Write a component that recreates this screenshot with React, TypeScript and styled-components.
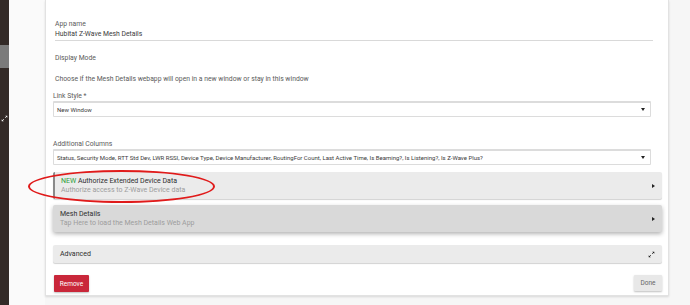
import React from "react";
import styled, { createGlobalStyle } from "styled-components";

const GlobalStyle = createGlobalStyle`
  html, body {
    margin: 0;
    padding: 0;
    background: #f6f6f6;
    font-family: Roboto, "Liberation Sans", Arial, sans-serif;
  }
`;

const Page = styled.div`
  display: flex;
  width: 690px;
  height: 305px;
  overflow: hidden;
`;

const SideBar = styled.div`
  width: 9px;
  flex-shrink: 0;
  background: #332a27;
  display: flex;
  flex-direction: column;
  align-items: center;
`;

const SideBlock = styled.div`
  margin-top: 45px;
  width: 100%;
  height: 23px;
  background: #7b7b7b;
`;

const SideIcon = styled.div`
  margin-top: 47px;
  line-height: 0;
`;

const Gutter = styled.div`
  width: 36px;
  flex-shrink: 0;
  background: #fafafa;
`;

const Panel = styled.div`
  width: 624px;
  height: 296px;
  box-sizing: border-box;
  background: #fff;
  border: 1px solid #e2e2e2;
  border-top: none;
  box-shadow: 0 1px 2px rgba(0, 0, 0, 0.12);
  padding: 0 6px 0 7px;
  display: flex;
  flex-direction: column;
`;

const Field = styled.div`
  margin: 19px 9px 0 2px;
  border-bottom: 1px solid #d9d9d9;
  padding-bottom: 1px;
`;

const Label = styled.div<{ top?: number; indent?: number }>`
  font-size: 6.8px;
  line-height: 10px;
  color: #5a5a5a;
  margin-top: ${(p) => p.top ?? 0}px;
  padding-left: ${(p) => p.indent ?? 0}px;
`;

const Value = styled.div`
  font-size: 6.8px;
  line-height: 10px;
  color: #3a3a3a;
`;

const Select = styled.div`
  margin-right: 11px;
  height: 16px;
  box-sizing: border-box;
  border: 1px solid #dcdcdc;
  border-top-width: 2px;
  border-radius: 1px;
  display: flex;
  align-items: center;
  justify-content: space-between;
  padding: 0 5px 0 3px;
  font-size: 6px;
  color: #3a3a3a;
  white-space: nowrap;
  overflow: hidden;
`;

const Caret = styled.span`
  width: 0;
  height: 0;
  border-left: 2.5px solid transparent;
  border-right: 2.5px solid transparent;
  border-top: 3px solid #222;
  flex-shrink: 0;
`;

const Card = styled.div<{ shade: string; top: number; height: number; accent?: boolean; raised?: boolean }>`
  position: relative;
  flex-shrink: 0;
  margin-top: ${(p) => p.top}px;
  height: ${(p) => p.height}px;
  box-sizing: border-box;
  background: ${(p) => p.shade};
  border-left: ${(p) => (p.accent ? "2px solid #8a8a8a" : "0")};
  border-radius: 2px;
  box-shadow: ${(p) =>
    p.raised
      ? "0 2px 4px rgba(0,0,0,0.3)"
      : "0 1px 1px rgba(0,0,0,0.18)"};
  display: flex;
  align-items: center;
  justify-content: space-between;
  padding: 0 7px 0 ${(p) => (p.accent ? 6 : 7)}px;
`;

const CardText = styled.div`
  display: flex;
  flex-direction: column;
`;

const CardTitle = styled.div`
  font-size: 7px;
  line-height: 9px;
  color: #2e2e2e;
`;

const New = styled.span`
  color: #2e9d3a;
`;

const CardSub = styled.div`
  font-size: 7px;
  line-height: 9px;
  color: #9d9d9d;
`;

const Arrow = styled.span`
  width: 0;
  height: 0;
  border-top: 2.5px solid transparent;
  border-bottom: 2.5px solid transparent;
  border-left: 3px solid #222;
`;

const Ring = styled.div`
  position: absolute;
  left: -27px;
  top: -2px;
  width: 187px;
  height: 33px;
  border: 2px solid #e01b1b;
  border-radius: 50%;
  box-sizing: border-box;
  pointer-events: none;
`;

const Footer = styled.div`
  margin-top: 12px;
  display: flex;
  justify-content: space-between;
  align-items: flex-start;
`;

const Button = styled.button<{ danger?: boolean }>`
  font-family: inherit;
  font-size: 6.5px;
  border: none;
  border-radius: 1px;
  padding: 0;
  height: ${(p) => (p.danger ? 17 : 16)}px;
  width: ${(p) => (p.danger ? 35 : 28)}px;
  margin-left: ${(p) => (p.danger ? 1 : 0)}px;
  background: ${(p) => (p.danger ? "#c9273a" : "#e8e8e8")};
  color: ${(p) => (p.danger ? "#fff" : "#666")};
  box-shadow: 0 1px 2px rgba(0, 0, 0, 0.25);
`;

const ExpandIcon = ({ color, size }: { color: string; size: number }) => (
  <svg width={size} height={size} viewBox="0 0 10 10">
    <path d="M6 1h3v3z M4 9H1V6z" fill={color} />
    <path d="M8 2L6 4 M2 8l2-2" stroke={color} strokeWidth="1.2" />
  </svg>
);

export default function App() {
  return (
    <>
      <GlobalStyle />
      <Page>
        <SideBar>
          <SideBlock />
          <SideIcon>
            <ExpandIcon color="#fff" size={7} />
          </SideIcon>
        </SideBar>
        <Gutter />
        <Panel>
          <Field>
            <Label>App name</Label>
            <Value>Hubitat Z-Wave Mesh Details</Value>
          </Field>
          <Label top={12} indent={2}>Display Mode</Label>
          <Label top={11} indent={2}>
            Choose if the Mesh Details webapp will open in a new window or stay in this window
          </Label>
          <Label top={7}>Link Style *</Label>
          <Select>
            <span>New Window</span>
            <Caret />
          </Select>
          <Label top={22}>Additional Columns</Label>
          <Select>
            <span>
              Status, Security Mode, RTT Std Dev, LWR RSSI, Device Type, Device Manufacturer, RoutingFor Count, Last Active Time, Is Beaming?, Is Listening?, Is Z-Wave Plus?
            </span>
            <Caret />
          </Select>
          <Card shade="#ebebeb" top={7} height={27} accent>
            <CardText>
              <CardTitle>
                <New>NEW</New> Authorize Extended Device Data
              </CardTitle>
              <CardSub>Authorize access to Z-Wave Device data</CardSub>
            </CardText>
            <Arrow />
            <Ring />
          </Card>
          <Card shade="#d9d9d9" top={6} height={27} raised>
            <CardText>
              <CardTitle>Mesh Details</CardTitle>
              <CardSub>Tap Here to load the Mesh Details Web App</CardSub>
            </CardText>
            <Arrow />
          </Card>
          <Card shade="#ebebeb" top={13} height={18}>
            <CardTitle>Advanced</CardTitle>
            <ExpandIcon color="#111" size={7} />
          </Card>
          <Footer>
            <Button danger>Remove</Button>
            <Button>Done</Button>
          </Footer>
        </Panel>
      </Page>
    </>
  );
}
